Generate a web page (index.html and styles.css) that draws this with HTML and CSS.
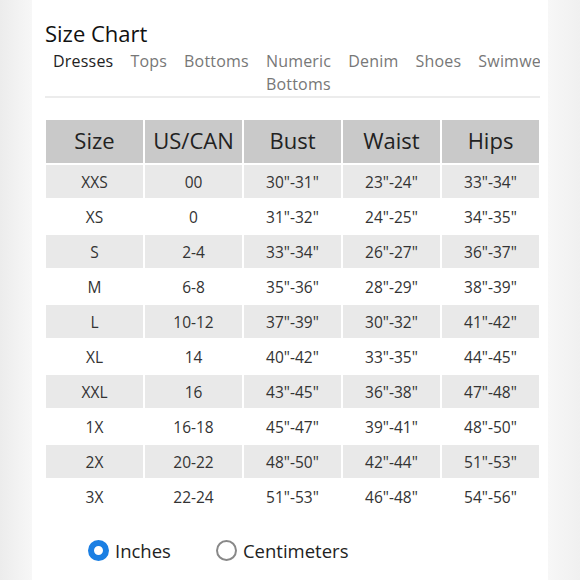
FILE: index.html
```html
<!DOCTYPE html>
<html>
<head>
<meta charset="utf-8">
<link rel="stylesheet" href="styles.css">
</head>
<body>
<div class="card">
  <h1 class="title">Size Chart</h1>
  <div class="tabs">
    <div class="tab active">Dresses</div>
    <div class="tab">Tops</div>
    <div class="tab">Bottoms</div>
    <div class="tab">Numeric<br>Bottoms</div>
    <div class="tab">Denim</div>
    <div class="tab">Shoes</div>
    <div class="tab">Swimwear</div>
  </div>
  <table class="chart">
    <thead>
      <tr><th>Size</th><th>US/CAN</th><th>Bust</th><th>Waist</th><th>Hips</th></tr>
    </thead>
    <tbody>
      <tr class="shade"><td>XXS</td><td>00</td><td>30"-31"</td><td>23"-24"</td><td>33"-34"</td></tr>
      <tr><td>XS</td><td>0</td><td>31"-32"</td><td>24"-25"</td><td>34"-35"</td></tr>
      <tr class="shade"><td>S</td><td>2-4</td><td>33"-34"</td><td>26"-27"</td><td>36"-37"</td></tr>
      <tr><td>M</td><td>6-8</td><td>35"-36"</td><td>28"-29"</td><td>38"-39"</td></tr>
      <tr class="shade"><td>L</td><td>10-12</td><td>37"-39"</td><td>30"-32"</td><td>41"-42"</td></tr>
      <tr><td>XL</td><td>14</td><td>40"-42"</td><td>33"-35"</td><td>44"-45"</td></tr>
      <tr class="shade"><td>XXL</td><td>16</td><td>43"-45"</td><td>36"-38"</td><td>47"-48"</td></tr>
      <tr><td>1X</td><td>16-18</td><td>45"-47"</td><td>39"-41"</td><td>48"-50"</td></tr>
      <tr class="shade"><td>2X</td><td>20-22</td><td>48"-50"</td><td>42"-44"</td><td>51"-53"</td></tr>
      <tr><td>3X</td><td>22-24</td><td>51"-53"</td><td>46"-48"</td><td>54"-56"</td></tr>
    </tbody>
  </table>
  <div class="units">
    <label class="unit"><span class="radio checked"></span>Inches</label>
    <label class="unit"><span class="radio"></span>Centimeters</label>
  </div>
</div>
</body>
</html>
```
FILE: styles.css
```css
html, body {
  margin: 0;
  padding: 0;
}
body {
  background: linear-gradient(to right, #ececec 0, #f7f7f7 32px, #f7f7f7 548px, #f0f0f0 580px);
  font-family: "Open Sans", "Noto Sans", sans-serif;
  color: #222;
  height: 580px;
  overflow: hidden;
}
.card {
  margin-left: 32px;
  width: 516px;
  height: 580px;
  background: #fff;
  box-sizing: border-box;
  padding: 19px 8px 0 13px;
}
.title {
  margin: 0;
  font-size: 22px;
  font-weight: 500;
  line-height: 28px;
  color: #111;
}
.tabs {
  display: flex;
  overflow: hidden;
  border-bottom: 2px solid #ececec;
  margin-top: 3px;
}
.tab {
  flex: none;
  padding: 0 9px 0 8px;
  font-size: 16px;
  line-height: 23px;
  color: #777;
  white-space: nowrap;
  letter-spacing: 0.2px;
}
.tab.active {
  color: #222;
  font-weight: 500;
  box-shadow: inset 0 -2px 0 #555;
  margin-bottom: -2px;
  padding-bottom: 2px;
}
.chart {
  border-collapse: separate;
  border-spacing: 2px;
  margin: 20px 0 0 -1px;
  width: 497px;
  table-layout: fixed;
}
.chart th {
  background: #c9c9c9;
  height: 43px;
  padding: 0 0 4px;
  box-sizing: border-box;
  font-size: 22px;
  font-weight: 500;
  color: #222;
}
.chart td {
  height: 33px;
  padding: 0;
  text-align: center;
  font-size: 15.5px;
  color: #333;
}
.chart tr.shade td {
  background: #e9e9e9;
}
.units {
  display: flex;
  gap: 45px;
  margin: 23px 0 0 43px;
}
.unit {
  display: flex;
  align-items: center;
  font-size: 18.5px;
  color: #222;
  gap: 6px;
}
.radio {
  width: 21px;
  height: 21px;
  box-sizing: border-box;
  border-radius: 50%;
  border: 2px solid #888;
  background: #fff;
}
.radio.checked {
  border: 6px solid #1b7fe3;
}
```
